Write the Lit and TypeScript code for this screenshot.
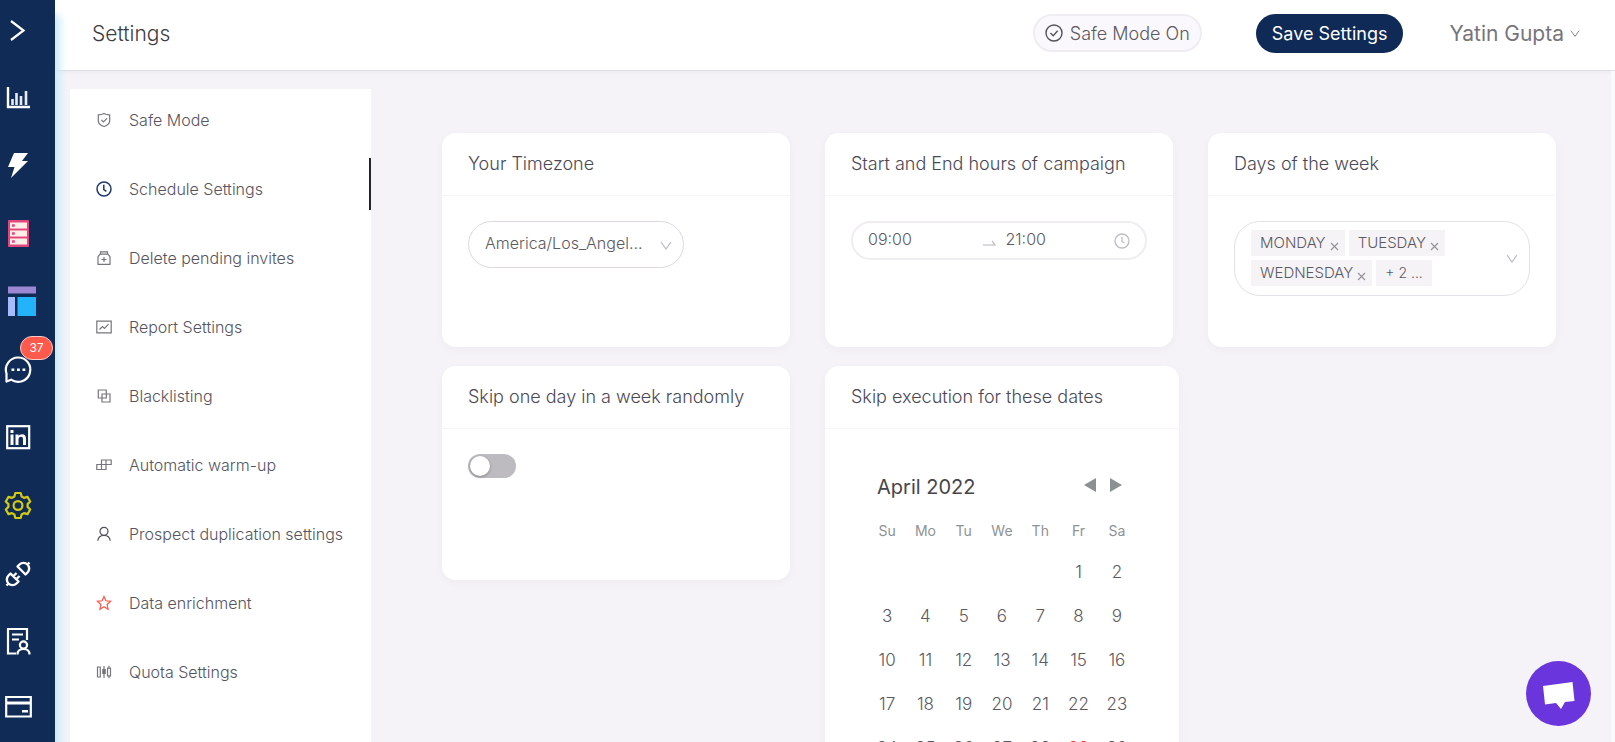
import { LitElement, html, css, svg, TemplateResult } from "lit";
import { customElement, property, state } from "lit/decorators.js";
import { classMap } from "lit/directives/class-map.js";

const railIcons: { label: string; art: TemplateResult }[] = [
  {
    label: "Analytics",
    art: svg`<path d="M8 7v20h22" fill="none" stroke="#fff" stroke-width="2.4"/>
      <path d="M12.500 25v-6M16.500 25v-12M21 25v-9M26 25V11" stroke="#e8ebf3" stroke-width="2.600"/>`,
  },
  {
    label: "Campaigns",
    art: svg`<path d="M14 5h14l-6 8h6L11 30l3.500-11H8z" fill="#fff"/>`,
  },
  {
    label: "Queues",
    art: svg`<rect x="8" y="4" width="21" height="27" rx="1" fill="#e3487d"/>
      <path d="M10 6.500h17v6H10zM10 14.500h17v6H10zM10 22.500h17v6H10z" fill="#fdeee8"/>
      <path d="M12 8.200h2.800v2.600H12zM12 16.200h2.800v2.600H12zM12 24.200h2.800v2.600H12z" fill="#e3487d"/>`,
  },
  {
    label: "Templates",
    art: svg`<path d="M8 2.500h28v7H8z" fill="#9d87d2"/><path d="M8 13h7v19H8z" fill="#a6bbfb"/>
      <path d="M17.500 13H36v19H17.500z" fill="#22b3fb"/>`,
  },
  {
    label: "Inbox",
    art: svg`<path d="M6.500 29.500V21.500a12.200 12.200 0 1 1 4.600 6.200z" fill="none" stroke="#fff" stroke-width="2.200" stroke-linejoin="round"/>
      <path d="M11.500 16.500h2.800v2.600h-2.800zM17 16.500h2.800v2.600H17zM22.500 16.500h2.800v2.600h-2.800z" fill="#fff"/>`,
  },
  {
    label: "LinkedIn",
    art: svg`<rect x="7.200" y="6.200" width="22" height="22" fill="none" stroke="#fff" stroke-width="2.200"/>
      <path d="M10.500 14.500h3V25h-3zM10.500 10h3v3h-3zM15.500 14.500h3v1.500c.7-1.100 1.900-1.800 3.500-1.800 2.900 0 4 1.800 4 4.600V25h-3v-5.600c0-1.600-.5-2.600-2-2.600-1.700 0-2.500 1.100-2.500 2.800V25h-3z" fill="#fff"/>`,
  },
  {
    label: "Settings",
    art: svg`<path d="M15.300 5h5.400l.9 3.500 2.400 1.400 3.500-1 2.700 4.600-2.600 2.600v2.800l2.600 2.600-2.700 4.600-3.500-1-2.400 1.400-.9 3.500h-5.400l-.9-3.500-2.400-1.400-3.500 1-2.700-4.600 2.600-2.600v-2.800l-2.600-2.600 2.700-4.600 3.500 1 2.400-1.400z" fill="none" stroke="#d3cb12" stroke-width="2.200" stroke-linejoin="round"/>
      <circle cx="18" cy="17.500" r="4.400" fill="none" stroke="#d3cb12" stroke-width="2.200"/>`,
  },
  {
    label: "Integrations",
    art: svg`<g fill="none" stroke="#fff" stroke-width="2.400" stroke-linejoin="round">
      <path d="M10.500 17.500l8 8-2 2a5.600 5.600 0 0 1-8-8zM6.500 29.500l2.500-2.500M13.500 20l3-3M16.500 23l3-3"/>
      <path d="M17.500 10.500l8 8 2-2a5.600 5.600 0 0 0-8-8zM27 9l2.500-2.500"/></g>`,
  },
  {
    label: "Prospects",
    art: svg`<g fill="none" stroke="#fff" stroke-width="2.200">
      <path d="M16 29.500H8V5h19v11M12 10.500h11M12 15.500h7"/><circle cx="23.500" cy="21" r="3.600"/>
      <path d="M17.500 30.500c0-3.500 2.500-5.500 6-5.500s6 2 6 5.500"/></g>`,
  },
  {
    label: "Billing",
    art: svg`<path d="M6.200 5h24.600v19.500H6.200z" fill="none" stroke="#fff" stroke-width="2.200"/>
      <path d="M6 11h25" stroke="#fff" stroke-width="3"/><path d="M22 18h6v2.500h-6z" fill="#fff"/>`,
  },
];

const menuItems: { label: string; tone?: string; art: TemplateResult }[] = [
  {
    label: "Safe Mode",
    art: svg`<path d="M8 1.500c1.800 1 3.700 1.300 5.700 1.300v6c0 3-2.500 4.800-5.700 5.700-3.200-.9-5.700-2.700-5.700-5.700v-6c2 0 3.900-.3 5.700-1.300z"/><path d="M5.300 7.800l2.100 2.100 3.600-3.600"/>`,
  },
  {
    label: "Schedule Settings",
    tone: "navy",
    art: svg`<circle cx="8" cy="8" r="7" stroke-width="1.500"/><path d="M7.800 3.800v4.700l2.600 1.800" stroke-width="1.500"/>`,
  },
  {
    label: "Delete pending invites",
    art: svg`<path d="M2 14.300V6.500l2.200-2.300h7.600L14 6.500v7.800zM4.500 4V1.800h7V4M8 7v5M5.500 9.500h5"/>`,
  },
  {
    label: "Report Settings",
    art: svg`<path d="M.8 2.200h14.400v11.600H.8z"/><path d="M3.500 10.500l3-3 2 2 4-4.300"/>`,
  },
  {
    label: "Blacklisting",
    art: svg`<path d="M2.300 2h8v8h-8zM6 6h8v8H6z"/>`,
  },
  {
    label: "Automatic warm-up",
    art: svg`<path d="M.8 7.500H10v5H.8zM5.500 3h9.700v4.500H5.500zM5.500 7.500v5M10 3v4.500"/>`,
  },
  {
    label: "Prospect duplication settings",
    tone: "dark",
    art: svg`<circle cx="8" cy="5.300" r="4"/><path d="M1.800 14.800c.3-3.300 2.800-5.500 6.200-5.500s5.900 2.200 6.200 5.500"/>`,
  },
  {
    label: "Data enrichment",
    tone: "red",
    art: svg`<path d="M8 1.500l1.900 4.300 4.700.5-3.500 3.200 1 4.700L8 11.800l-4.100 2.400 1-4.700L1.400 6.300l4.700-.5z"/>`,
  },
  {
    label: "Quota Settings",
    art: svg`<path d="M1.500 3h2.800v10H1.500zM8 2v12M6.800 5.500h2.400v4H6.800zM13 1.800v2M13 12v2.200M11.500 4.200h3v7.600h-3z"/>`,
  },
];

@customElement("settings-card")
export class SettingsCard extends LitElement {
  @property() heading = "";

  static styles = css`
    :host {
      display: block;
      box-sizing: border-box;
      min-height: 214px;
      border-radius: 14px;
      background: #fff;
      box-shadow: 0 3px 8px rgba(90, 70, 160, 0.04);
    }
    .heading {
      box-sizing: border-box;
      height: 63px;
      margin: 0;
      padding: 17px 26px;
      border-bottom: 1px solid #f6f4f8;
      font-size: 18px;
      font-weight: 300;
      line-height: 28px;
      white-space: nowrap;
      color: #4b4856;
    }
    .body {
      padding: 25px 26px;
    }
  `;

  render() {
    return html`<h2 class="heading">${this.heading}</h2>
      <div class="body"><slot></slot></div>`;
  }
}

@customElement("app-root")
export class AppRoot extends LitElement {
  @state() private active = "Schedule Settings";
  @state() private days = ["MONDAY", "TUESDAY", "WEDNESDAY"];

  static styles = css`
    :host {
      display: flex;
      height: 100vh;
      overflow: hidden;
      background: #f5f3f7;
      color: #5b5962;
      font-family: Inter, "Open Sans", sans-serif;
      font-size: 16px;
      font-weight: 300;
    }
    button,
    input,
    select {
      margin: 0;
      padding: 0;
      border: 0;
      background: none;
      color: inherit;
      font: inherit;
    }
    button {
      cursor: pointer;
    }
    svg {
      display: block;
      flex: none;
    }
    .rail {
      position: relative;
      z-index: 1;
      display: flex;
      flex: none;
      flex-direction: column;
      width: 55px;
      background: #112b57;
      box-shadow: 2px 18px 8px 3px #c9ebfb;
    }
    .rail-button {
      position: relative;
      display: flex;
      flex: none;
      align-items: center;
      height: 68px;
      color: #fff;
      text-decoration: none;
    }
    .rail-button.expand {
      height: 64px;
    }
    .badge {
      position: absolute;
      top: 0;
      right: 2px;
      box-sizing: border-box;
      min-width: 33px;
      padding: 0 8px;
      border: 1px solid #ffc9c4;
      border-radius: 12px;
      background: #ff5a4b;
      font-size: 12px;
      font-weight: 400;
      line-height: 22px;
      text-align: center;
    }
    .page {
      display: flex;
      flex: 1;
      flex-direction: column;
      min-width: 0;
    }
    .topbar {
      display: flex;
      flex: none;
      align-items: center;
      box-sizing: border-box;
      height: 71px;
      padding: 0 35px 4px 37px;
      border-bottom: 1px solid #dfdde2;
      background: #fff;
      box-shadow: 0 1px 4px rgba(0, 0, 0, 0.04);
    }
    .title {
      margin: 0 auto 0 0;
      font-size: 21px;
      font-weight: 300;
      color: #3c3b40;
    }
    .safe {
      display: flex;
      align-items: center;
      justify-content: center;
      gap: 7px;
      box-sizing: border-box;
      height: 38px;
      padding: 0 10px;
      border: 2px solid #efedf2;
      border-radius: 19px;
      background: #faf8fc;
      font-size: 18px;
      color: #5b5960;
    }
    .save {
      height: 39px;
      margin-left: 54px;
      padding: 0 16px;
      border-radius: 20px;
      background: #0f2a57;
      font-size: 18px;
      font-weight: 400;
      color: #fff;
    }
    .user {
      display: flex;
      align-items: center;
      gap: 6px;
      margin-left: 46px;
      font-size: 21px;
      font-weight: 400;
      color: #77757b;
    }
    .columns {
      display: flex;
      flex: 1;
      min-height: 0;
    }
    .menu {
      display: flex;
      flex: none;
      flex-direction: column;
      gap: 17px;
      box-sizing: border-box;
      width: 301px;
      margin: 18px 0 0 15px;
      background: #fff;
    }
    .menu-link {
      display: flex;
      align-items: center;
      gap: 17px;
      box-sizing: border-box;
      height: 52px;
      padding: 10px 0 0 26px;
      border-right: 2px solid transparent;
      color: #56545f;
      text-decoration: none;
      white-space: nowrap;
    }
    .menu-link.active {
      border-right-color: #25242a;
    }
    .glyph {
      fill: none;
      stroke: #77757b;
      stroke-width: 1.200;
    }
    .glyph.navy {
      stroke: #1b3a6e;
    }
    .glyph.dark {
      stroke: #514f58;
    }
    .glyph.red {
      stroke: #ff5347;
    }
    .content {
      display: grid;
      flex: 1;
      grid-template-columns: repeat(3, minmax(0, 1fr));
      align-content: start;
      align-items: start;
      gap: 19px 35px;
      min-width: 0;
      padding: 62px 55px 40px 71px;
      border-right: 4px solid #f9f8fb;
      overflow: auto;
      scrollbar-width: none;
    }
    .calendar-card {
      width: max-content;
    }
    .picker {
      position: relative;
      width: 216px;
    }
    .zone {
      box-sizing: border-box;
      width: 100%;
      height: 47px;
      padding: 0 38px 3px 16px;
      border: 1px solid #dcd7e1;
      border-radius: 24px;
      appearance: none;
      font-size: 16px;
      text-overflow: ellipsis;
    }
    .picker .arrow {
      position: absolute;
      top: 20px;
      right: 12px;
      pointer-events: none;
    }
    .hours {
      display: flex;
      align-items: center;
      box-sizing: border-box;
      height: 39px;
      padding: 0 15px;
      border: 2px solid #efecf2;
      border-radius: 20px;
    }
    .hour {
      flex: 1;
      width: 0;
      min-width: 0;
      padding-bottom: 4px;
    }
    .swap {
      margin: 4px 10px 0 6px;
    }
    .days {
      display: flex;
      align-items: center;
      box-sizing: border-box;
      padding: 8px 11px 9px 16px;
      border: 1px solid #e4e0e8;
      border-radius: 26px;
    }
    .tags {
      display: flex;
      flex: 1;
      flex-wrap: wrap;
      gap: 4px;
    }
    .tag {
      display: flex;
      align-items: center;
      gap: 4px;
      height: 26px;
      padding: 0 6px 0 9px;
      background: #f5f3f6;
      font-size: 15px;
      line-height: 26px;
    }
    .tag.more {
      padding-right: 9px;
      font-size: 14px;
    }
    .remove {
      padding-top: 6px;
    }
    .switch {
      display: block;
      box-sizing: border-box;
      width: 48px;
      height: 24px;
      padding: 2px;
      border-radius: 12px;
      appearance: none;
      background: #bdbbbf;
      cursor: pointer;
    }
    .switch::before {
      display: block;
      width: 20px;
      height: 20px;
      border-radius: 50%;
      background: #fff;
      box-shadow: 0 1px 3px rgba(0, 0, 0, 0.3);
      content: "";
    }
    .switch:checked {
      background: #112b57;
    }
    .switch:checked::before {
      margin-left: 24px;
    }
    .calendar {
      padding: 20px 17px 0;
    }
    .month-bar {
      display: flex;
      align-items: center;
      gap: 14px;
      height: 26px;
      margin-bottom: 10px;
      padding: 0 14px 0 9px;
    }
    .month {
      flex: 1;
      font-size: 20px;
      font-weight: 400;
      color: #46454b;
    }
    .month-step {
      padding-bottom: 5px;
    }
    .dates {
      width: 268px;
      border-collapse: collapse;
      table-layout: fixed;
      text-align: center;
    }
    .weekday {
      height: 40px;
      padding: 0;
      font-size: 14px;
      font-weight: 400;
      color: #8e9297;
    }
    .date {
      height: 44px;
      padding: 0;
      font-size: 17px;
    }
    .date.today {
      color: #e5383b;
    }
    .chat {
      position: fixed;
      right: 24px;
      bottom: 16px;
      z-index: 2;
      width: 65px;
      height: 65px;
      border-radius: 50%;
      background: #6a35dc;
    }
  `;

  private chevron(width: number, color: string) {
    return html`<svg class="arrow" width=${width} height="9" viewBox="0 0 12 9" fill="none" stroke=${color} stroke-width="1.200">
      <path d="M1 1l5 7 5-7" />
    </svg>`;
  }

  private renderCalendar() {
    const cells = [...Array(5).fill(0), ...Array.from({ length: 30 }, (_, i) => i + 1)];
    const weeks = Array.from({ length: 5 }, (_, w) => cells.slice(w * 7, w * 7 + 7));
    return html`<div class="calendar">
      <div class="month-bar">
        <span class="month">April 2022</span>
        <button class="month-step" aria-label="Previous month">
          <svg width="12" height="14"><path d="M12 0v14L0 7z" fill="#8b9193" /></svg>
        </button>
        <button class="month-step" aria-label="Next month">
          <svg width="12" height="14"><path d="M0 0v14l12-7z" fill="#8b9193" /></svg>
        </button>
      </div>
      <table class="dates">
        <thead>
          <tr>
            ${["Su", "Mo", "Tu", "We", "Th", "Fr", "Sa"].map((d) => html`<th class="weekday" scope="col">${d}</th>`)}
          </tr>
        </thead>
        <tbody>
          ${weeks.map(
            (week) => html`<tr>
              ${week.map((d) => html`<td class=${classMap({ date: true, today: d === 29 })}>${d || ""}</td>`)}
            </tr>`
          )}
        </tbody>
      </table>
    </div>`;
  }

  render() {
    return html`
      <nav class="rail" aria-label="Main">
        <button class="rail-button expand" aria-label="Expand menu">
          <svg width="36" height="36" viewBox="0 0 36 36"><path d="M11 7l12.500 9.500L11 26" fill="none" stroke="#fff" stroke-width="2.200" /></svg>
        </button>
        ${railIcons.map(
          (icon) => html`<a class="rail-button" href="#" aria-label=${icon.label}>
            <svg width="36" height="36" viewBox="0 0 36 36">${icon.art}</svg>
            ${icon.label === "Inbox" ? html`<span class="badge">37</span>` : ""}
          </a>`
        )}
      </nav>
      <div class="page">
        <header class="topbar">
          <h1 class="title">Settings</h1>
          <button class="safe">
            <svg width="18" height="18" viewBox="0 0 18 18" fill="none" stroke="#55535a" stroke-width="1.400">
              <circle cx="9" cy="9" r="8" />
              <path d="M5.500 9l2.700 2.700 4.500-5" />
            </svg>
            Safe Mode On
          </button>
          <button class="save">Save Settings</button>
          <button class="user">Yatin Gupta ${this.chevron(10, "#88868c")}</button>
        </header>
        <div class="columns">
          <nav class="menu" aria-label="Settings sections">
            ${menuItems.map(
              (item) => html`<a
                class=${classMap({ "menu-link": true, active: item.label === this.active })}
                href="#"
                @click=${() => (this.active = item.label)}
              >
                <svg class="glyph ${item.tone ?? ""}" width="16" height="16" viewBox="0 0 16 16">${item.art}</svg>
                ${item.label}
              </a>`
            )}
          </nav>
          <main class="content">
            <settings-card heading="Your Timezone">
              <div class="picker">
                <select class="zone" aria-label="Your Timezone">
                  <option>America/Los_Angel...</option>
                </select>
                ${this.chevron(12, "#bdb9c1")}
              </div>
            </settings-card>
            <settings-card heading="Start and End hours of campaign">
              <div class="hours">
                <input class="hour" aria-label="Start hour" value="09:00" />
                <svg class="swap" width="13" height="6" viewBox="0 0 13 6" fill="none" stroke="#b9b6bd" stroke-width="1.200"><path d="M0 5h12L9 1" /></svg>
                <input class="hour" aria-label="End hour" value="21:00" />
                <svg width="16" height="16" viewBox="0 0 16 16" fill="none" stroke="#bfbcc3" stroke-width="1.300">
                  <circle cx="8" cy="8" r="7" />
                  <path d="M8 4v4.500l2.500 1.500" />
                </svg>
              </div>
            </settings-card>
            <settings-card heading="Days of the week">
              <div class="days">
                <div class="tags">
                  ${this.days.map(
                    (day) => html`<span class="tag"
                      >${day}
                      <button class="remove" aria-label="Remove ${day}" @click=${() => (this.days = this.days.filter((d) => d !== day))}>
                        <svg width="9" height="9" stroke="#96939a" stroke-width="1.200"><path d="M1 1l7 7M8 1L1 8" /></svg>
                      </button>
                    </span>`
                  )}
                  <span class="tag more">+ 2 ...</span>
                </div>
                ${this.chevron(12, "#bdb9c1")}
              </div>
            </settings-card>
            <settings-card heading="Skip one day in a week randomly">
              <input class="switch" type="checkbox" role="switch" aria-label="Skip one day in a week randomly" />
            </settings-card>
            <settings-card class="calendar-card" heading="Skip execution for these dates">${this.renderCalendar()}</settings-card>
          </main>
        </div>
      </div>
      <button class="chat" aria-label="Open chat">
        <svg width="65" height="65" viewBox="0 0 65 65"><path d="M17 25l29.500-4L48.500 40l-9.500 1-4 7-5-6-11 1.500z" fill="#fff" /></svg>
      </button>
    `;
  }
}
